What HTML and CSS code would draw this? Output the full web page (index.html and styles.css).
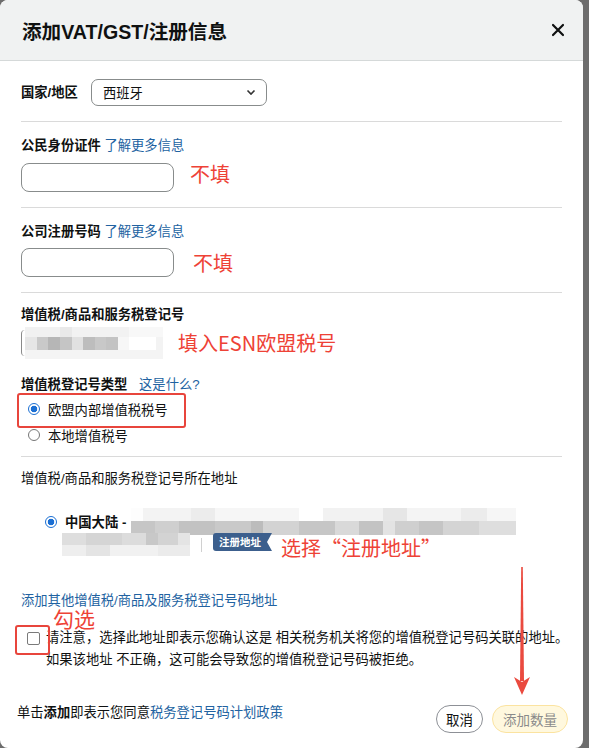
FILE: index.html
```html
<!DOCTYPE html>
<html lang="zh-CN">
<head>
  <meta charset="UTF-8">
  <title>添加VAT/GST/注册信息</title>
  <link rel="stylesheet" href="styles.css">
</head>
<body>
<div class="modal">
  <!-- Header -->
  <div class="modal-header">
    <h2>添加VAT/GST/注册信息</h2>
    <svg class="close" width="14" height="14" viewBox="0 0 14 14">
      <path d="M2 2L12 12M12 2L2 12" stroke="#0f1111" stroke-width="2.2" stroke-linecap="round"/>
    </svg>
  </div>

  <div class="modal-body">
    <!-- Country -->
    <div class="row-country">
      <span class="label">国家/地区</span>
      <div class="select">
        <span>西班牙</span>
        <svg width="10" height="7" viewBox="0 0 10 7"><path d="M1.5 1.5L5 5L8.5 1.5" fill="none" stroke="#333" stroke-width="1.6"/></svg>
      </div>
    </div>

    <!-- Citizen ID -->
    <div class="section">
      <div class="label">公民身份证件 <a class="link">了解更多信息</a></div>
      <div class="field-row">
        <div class="input"></div>
        <span class="note note-1">不填</span>
      </div>
    </div>

    <!-- Company registration -->
    <div class="section">
      <div class="label">公司注册号码 <a class="link">了解更多信息</a></div>
      <div class="field-row">
        <div class="input"></div>
        <span class="note note-2">不填</span>
      </div>
    </div>

    <!-- VAT number -->
    <div class="section section-vat">
      <div class="label">增值税/商品和服务税登记号</div>
      <div class="field-row vat-row">
        <div class="vat-input">
          <span class="edge"></span>
          <span class="blur blur-vat"></span>
        </div>
        <span class="note">填入ESN欧盟税号</span>
      </div>
      <div class="label type-label">增值税登记号类型 <a class="link">这是什么?</a></div>
      <div class="radio-row"><span class="radio on"></span>欧盟内部增值税税号</div>
      <div class="radio-row"><span class="radio"></span>本地增值税号</div>
    </div>

    <!-- Address -->
    <div class="address">
      <div class="address-title">增值税/商品和服务税登记号所在地址</div>
      <div class="addr-line">
        <span class="radio on"></span>
        <b>中国大陆 -</b>
        <span class="blur blur-addr1"></span>
      </div>
      <div class="addr-line-2">
        <span class="blur blur-addr2"></span>
        <span class="sep"></span>
        <span class="badge">注册地址</span>
        <span class="note">选择“注册地址”</span>
      </div>
      <a class="link add-link">添加其他增值税/商品及服务税登记号码地址</a>
      <div class="confirm">
        <span class="checkbox"></span>
        <p>请注意，选择此地址即表示您确认这是 相关税务机关将您的增值税登记号码关联的地址。如果该地址 不正确，这可能会导致您的增值税登记号码被拒绝。</p>
      </div>
    </div>
  </div>

  <!-- Footer -->
  <div class="modal-footer">
    <p>单击<b>添加</b>即表示您同意<a class="link">税务登记号码计划政策</a></p>
    <div class="buttons">
      <button class="btn">取消</button>
      <button class="btn btn-primary">添加数量</button>
    </div>
  </div>

  <!-- Annotations drawn on top -->
  <div class="mark mark-type"></div>
  <div class="mark mark-check"></div>
  <span class="note tick-note">勾选</span>
  <svg class="arrow" width="20" height="132" viewBox="0 0 20 132">
    <polygon points="9.2,0 10.8,0 12,114 8,114" fill="#ea4a3f"/>
    <polygon points="2,110 10,128 18,110 10,115" fill="#ea4a3f"/>
  </svg>
</div>
</body>
</html>
```

FILE: styles.css
```css
body {
  margin: 0;
  background: #6d6d6d;
  font-family: "Liberation Sans", "Noto Sans CJK SC", sans-serif;
  color: #0f1111;
}
.modal {
  position: relative;
  width: 583px;
  height: 748px;
  background: #fff;
  border-radius: 8px;
  overflow: hidden;
  display: flex;
  flex-direction: column;
}
.modal-header {
  height: 60px;
  background: #f0f2f2;
  border-bottom: 1px solid #d5d9d9;
  display: flex;
  align-items: center;
  justify-content: space-between;
  padding: 0 18px 0 22px;
}
.modal-header h2 {
  margin: 0;
  font-size: 19.6px;
  font-weight: bold;
}
.modal-body {
  padding: 0 21px;
  font-size: 13.3px;
}
.label {
  font-weight: bold;
  line-height: 18px;
}
.link {
  color: #2162a1;
  font-weight: normal;
  text-decoration: none;
}
.row-country {
  display: flex;
  align-items: center;
  gap: 13px;
  padding: 18px 0 15px;
  border-bottom: 1px solid #dadada;
}
.select {
  width: 176px;
  height: 27px;
  box-sizing: border-box;
  border: 1px solid #888c8c;
  border-radius: 7px;
  display: flex;
  align-items: center;
  justify-content: space-between;
  padding: 0 10px 0 11px;
}
.section {
  padding: 15px 0 15px;
  border-bottom: 1px solid #dadada;
}
.field-row {
  display: flex;
  align-items: center;
  margin-top: 7px;
}
.input {
  width: 153px;
  height: 29px;
  box-sizing: border-box;
  border: 1px solid #888c8c;
  border-radius: 8px;
}
.note {
  color: #ee4236;
  font-family: "Noto Sans CJK SC", sans-serif;
  font-size: 20px;
  line-height: 24px;
  margin-left: 16px;
}
.note-1 {
  margin-bottom: 6px;
}
.note-2 {
  margin-left: 19px;
}
.section-vat {
  padding: 13px 0 8px;
}
.vat-row {
  margin-top: 3px;
}
.vat-input {
  display: flex;
  height: 32px;
}
.edge {
  width: 3px;
  height: 26px;
  margin-top: 3px;
  border-left: 1px solid #8a8a8a;
  border-radius: 8px 0 0 8px;
}
.blur {
  display: block;
}
.blur-vat {
  width: 138px;
  height: 32px;
  background:
    linear-gradient(to right, #e6e6e6 0 12px, #c9c9c9 12px 23px, #b6b6b6 23px 35px, #c5c5c5 35px 47px, #e1e1e1 47px 58px, #bdbdbd 58px 70px, #c8c8c8 70px 81px, #c3c3c3 81px 93px, #f7f7f7 93px 104px, #fff 104px 131px, #f3f3f3 131px) 0 10px / 100% 13px no-repeat,
    linear-gradient(to right, #f1f1f1 0 35px, #e9e9e9 35px 47px, #f2f2f2 47px 104px, #f8f8f8 104px) 0 0 / 100% 10px no-repeat,
    #f4f4f4;
}
.vat-row .note {
  margin-left: 15px;
}
.type-label {
  margin-top: 17px;
}
.type-label .link {
  margin-left: 8px;
}
.radio-row {
  display: flex;
  align-items: center;
  height: 26px;
  padding-left: 7px;
}
.type-label + .radio-row {
  margin-top: 2px;
}
.radio {
  width: 12px;
  height: 12px;
  box-sizing: border-box;
  border: 1px solid #767676;
  border-radius: 50%;
  margin-right: 8px;
  flex: none;
}
.radio.on {
  border: 1.5px solid #1b6fd3;
  background: radial-gradient(circle, #1b6fd3 0 3px, #fff 3.6px);
}
.address {
  padding-top: 13px;
}
.address-title {
  line-height: 18px;
}
.addr-line {
  display: flex;
  align-items: center;
  height: 27px;
  margin-top: 20px;
  padding-left: 24px;
}
.addr-line b {
  margin-right: 5px;
}
.blur-addr1 {
  width: 385px;
  height: 27px;
  background:
    linear-gradient(to right, #c6c6c6 0 24px, #cfcfcf 24px 48px, #c2c2c2 48px 84px, #c9c9c9 84px 120px, #bcbcbc 120px 132px, #d3d3d3 132px 168px, #c6c6c6 168px 204px, #d9d9d9 204px 228px, #c3c3c3 228px 252px, #e3e3e3 252px 264px, #cfcfcf 264px 288px, #c5c5c5 288px 312px, #d4d4d4 312px 348px, #dedede 348px) 0 13px / 100% 14px no-repeat,
    linear-gradient(to right, #fdfdfd 0 12px, #f3f3f3 12px 60px, #ececec 60px 84px, #f6f6f6 84px 168px, #ffffff 168px 192px, #f2f2f2 192px 252px, #e6e6e6 252px 276px, #f4f4f4 276px 330px, #ececec 330px 356px, #f6f6f6 356px) 0 0 / 100% 13px no-repeat;
}
.addr-line-2 {
  display: flex;
  align-items: center;
  height: 23px;
  margin-top: -2px;
  padding-left: 41px;
}
.blur-addr2 {
  width: 128px;
  height: 23px;
  background:
    linear-gradient(to right, #dedede 0 24px, #d5d5d5 24px 60px, #dcdcdc 60px 84px, #c8c8c8 84px 96px, #d3d3d3 96px 116px, #e4e4e4 116px) 0 0 / 100% 12px no-repeat,
    linear-gradient(to right, #eeeeee 0 24px, #e4e4e4 24px 48px, #f1f1f1 48px 96px, #ebebeb 96px) 0 12px / 100% 11px no-repeat;
}
.sep {
  width: 1px;
  height: 14px;
  background: #d0d0d0;
  margin: 0 11px;
}
.badge {
  background: #3c5f8d;
  color: #fff;
  font-size: 10.5px;
  font-weight: bold;
  line-height: 18px;
  height: 18px;
  padding: 0 11px 0 6px;
  border-radius: 3px 0 0 3px;
  clip-path: polygon(0 0, 100% 0, calc(100% - 5px) 50%, 100% 100%, 0 100%);
  align-self: flex-start;
}
.addr-line-2 .note {
  margin-left: 9px;
  margin-top: 6px;
}
.add-link {
  display: block;
  line-height: 18px;
  margin-top: 36px;
}
.confirm {
  display: flex;
  align-items: flex-start;
  margin-top: 17px;
}
.checkbox {
  width: 11px;
  height: 11px;
  border: 1px solid #7a7a7a;
  border-radius: 2px;
  margin: 5px 6px 0 6px;
  flex: none;
}
.confirm p {
  margin: 0;
  line-height: 22px;
  width: 528px;
  flex: none;
}
.modal-footer {
  display: flex;
  justify-content: space-between;
  align-items: flex-start;
  padding: 0 15px 0 17px;
  margin-top: 33px;
  font-size: 13.3px;
}
.modal-footer p {
  margin: 0;
  line-height: 18px;
}
.buttons {
  display: flex;
  gap: 9px;
  margin-top: 1px;
}
.btn {
  height: 28px;
  border-radius: 14px;
  border: 1px solid #8d9096;
  background: #fff;
  font-family: "Noto Sans CJK SC", sans-serif;
  font-size: 13.5px;
  color: #0f1111;
  padding: 0 9px;
}
.btn-primary {
  background: #fff8de;
  border-color: #fbe3a0;
  color: #8a8a8a;
  padding: 0 10px;
}
/* red annotation marks */
.mark {
  position: absolute;
  border: 2.5px solid #e8453c;
  border-radius: 3px;
}
.mark-type {
  left: 17px;
  top: 393px;
  width: 165px;
  height: 31px;
}
.mark-check {
  left: 15px;
  top: 625px;
  width: 31px;
  height: 26px;
}
.tick-note {
  position: absolute;
  left: 53px;
  top: 608px;
  margin: 0;
  font-size: 21px;
  line-height: 21px;
}
.arrow {
  position: absolute;
  left: 512px;
  top: 567px;
}
```
